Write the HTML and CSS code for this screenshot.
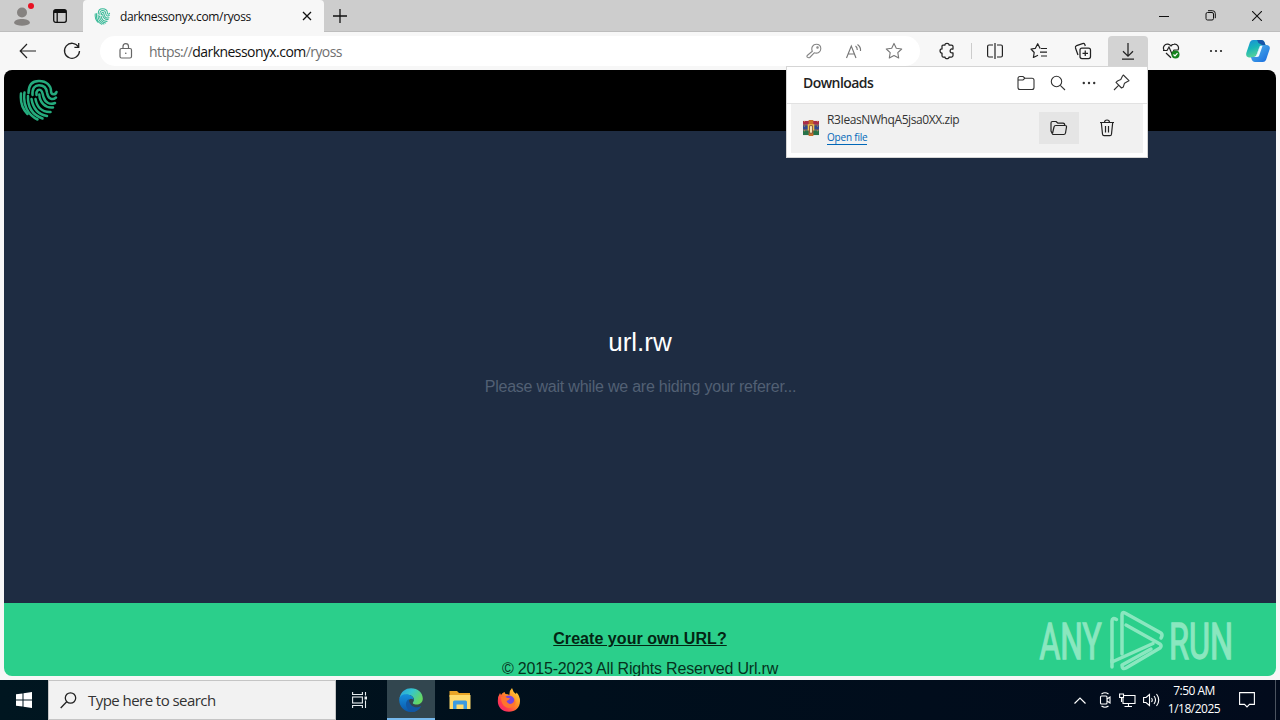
FILE: index.html
```html
<!DOCTYPE html>
<html lang="en">
<head>
<meta charset="utf-8">
<title>darknessonyx.com/ryoss</title>
<link rel="stylesheet" href="styles.css">
</head>
<body>
<svg class="defs" width="0" height="0">
  <symbol id="finger" viewBox="0 0 40 42">
    <g fill="none" stroke="currentColor" stroke-width="2.5" stroke-linecap="round">
      <path d="M9.500 14C9.500 5 14 2 20 2C28 2 32 7 32 12C32 16.500 36.500 16 37.500 13"/>
      <path d="M13.500 16C13 9 16 6.300 20 6.300C25 6.300 27.500 9.500 28 13.500C29 20 33.500 21.500 37 18.500"/>
      <path d="M17.500 16C17 11 20 10.200 21.500 11C24 12.500 23.500 15 24.500 18C26.500 24 31 26 36 24"/>
      <path d="M20.300 15.500C20.500 23 26 29.500 34 28.500"/>
      <path d="M16.500 20C18 28 23 33.500 31.500 33"/>
      <path d="M12.500 20C14 29 19.500 35.500 28 37"/>
      <path d="M9 17C8.500 28 14 36 23.500 39.500"/>
      <path d="M5.500 13.500C3.500 26 9 36 18.500 40.500"/>
      <path d="M2 14.500C1.200 22 3.500 30 8.500 35"/>
    </g>
  </symbol>
</svg>
<div class="screen">
  <div class="tabbar">
    <div class="profile"><svg width="18" height="20" viewBox="0 0 18 20"><circle cx="8" cy="5.500" r="5" fill="#858280"/><path d="M0 16C0 10.500 16 10.500 16 16C14 19.500 2 19.500 0 16Z" fill="#858280"/></svg><i class="dot"></i></div>
    <svg class="workspaces" width="14" height="14" viewBox="0 0 14 14" fill="none" stroke="#111" stroke-width="1.300"><rect x=".7" y=".7" width="12.600" height="12.600" rx="2"/><path d="M1 2.500H13" stroke-width="3"/><path d="M4.200 3V13"/></svg>
    <div class="tab">
      <svg class="tabicon" width="17" height="17"><use href="#finger"/></svg>
      <span class="tabtitle">darknessonyx.com/ryoss</span>
      <svg class="tabclose" width="10" height="10" viewBox="0 0 10 10" stroke="#111" stroke-width="1.300"><path d="M1 1L9 9M9 1L1 9"/></svg>
    </div>
    <svg class="newtab" width="14" height="14" viewBox="0 0 14 14" stroke="#111" stroke-width="1.300"><path d="M7 0V14M0 7H14"/></svg>
    <div class="wincontrols">
      <svg width="10" height="10" viewBox="0 0 10 10" stroke="#111"><path d="M0 5.500H10"/></svg>
      <svg width="11" height="11" viewBox="0 0 11 11" fill="none" stroke="#111"><rect x="1" y="2.500" width="7.500" height="7.500" rx="1.500"/><path d="M3 .7H7.500Q10.300 .7 10.300 3.500V8.200"/></svg>
      <svg width="10" height="10" viewBox="0 0 10 10" stroke="#111" stroke-width="1.100"><path d="M0 0L10 10M10 0L0 10"/></svg>
    </div>
  </div>

  <div class="toolbar">
    <div class="cell nav"><svg width="18" height="16" viewBox="0 0 18 16" fill="none" stroke="#222" stroke-width="1.200"><path d="M17 8H1.500M8 1L1.200 8L8 15"/></svg></div>
    <div class="cell nav"><svg width="18" height="18" viewBox="0 0 18 18" fill="none" stroke="#222" stroke-width="1.300"><path d="M15.500 5A7.500 7.500 0 1 0 16.500 9M15.700 1V5.300H11.400"/></svg></div>
    <div class="address">
      <svg class="lock" width="14" height="16" viewBox="0 0 14 16" fill="none" stroke="#666" stroke-width="1.200"><rect x="1" y="5.500" width="11.500" height="9.500" rx="1.500"/><path d="M4 5.500V3.500Q4 .7 6.750 .7T9.500 3.500V5.500"/><circle cx="6.750" cy="10.200" r=".8" fill="#666" stroke="none"/></svg>
      <span class="url"><span class="dim">https://</span><span class="host">darknessonyx.com</span><span class="dim path">/ryoss</span></span>
      <div class="addricons">
        <div class="cell"><svg width="16" height="16" viewBox="0 0 16 16" fill="none" stroke="#858585" stroke-width="1.100"><path d="M6.300 8.300C4.800 4.500 7 1.300 10.300 1.300C13 1.300 14.800 3.200 14.800 5.700C14.800 9 11.500 11 8.200 9.800L3.800 14.500Q2.500 15.200 1.300 14.200Q.5 13 1.500 12.200Z"/><circle cx="11.500" cy="4.500" r=".7"/></svg></div>
        <div class="cell"><svg width="18" height="17" viewBox="0 0 18 17" fill="none" stroke="#777" stroke-width="1.150"><path d="M1.500 15L6.300 3L11 15M3 11H9.500M10.500 3Q12.300 4.200 12.300 7M12.500 1.500Q16 4 15.500 8"/></svg></div>
        <div class="cell"><svg width="18" height="18" viewBox="0 0 18 18" fill="none" stroke="#777" stroke-width="1.100" stroke-linejoin="round"><path d="M9 1.400L11.300 6.200L16.700 7L12.800 10.700L13.700 16L9 13.500L4.300 16L5.200 10.700L1.300 7L6.700 6.200Z"/></svg></div>
      </div>
    </div>
    <div class="cell ext"><svg width="18" height="18" viewBox="0 0 18 18" fill="none" stroke="#222" stroke-width="1.250" stroke-linejoin="round"><path d="M4 4Q4 3 5 3H7C6.600 .7 11.400 .7 11 3H13.500Q15 3 15 4.500V7H14C11.500 6.800 11.500 11 14 10.900H15V13.500Q15 15 13.500 15H11C11.400 17.200 6.600 17.200 7 15H5Q4 15 4 13.500V11C1.600 11.400 1.200 6.600 4 7Z"/></svg></div>
    <i class="divider"></i>
    <div class="actions">
      <div class="cell"><svg width="18" height="16" viewBox="0 0 18 16" fill="none" stroke="#222" stroke-width="1.200"><path d="M7 2H3Q1.600 2 1.600 3.500V12.500Q1.600 14 3 14H7M11 2H15Q16.400 2 16.400 3.500V12.500Q16.400 14 15 14H11M9 0V16"/></svg></div>
      <div class="cell"><svg width="18" height="18" viewBox="0 0 18 18" fill="none" stroke="#222" stroke-width="1.200" stroke-linejoin="round"><path d="M10.500 6.300H10L7.700 1.700L5.400 6.300L1 7L4.200 10.500L3.400 15.500L8 13.300M11 6.500H17M10 10.200H17M11 14H17"/></svg></div>
      <div class="cell"><svg width="18" height="18" viewBox="0 0 18 18" fill="none" stroke="#222" stroke-width="1.250"><rect x="6" y="6" width="10.500" height="10.500" rx="2"/><path d="M11.250 8.500V14M8.500 11.250H14M4 13L1.500 6Q1 4.300 2.600 3.700L8.500 1.600Q10.200 1 10.800 2.500L11.300 4"/></svg></div>
      <div class="cell active"><svg width="14" height="17" viewBox="0 0 14 17" fill="none" stroke="#222" stroke-width="1.250"><path d="M7 0V13M2 8.300L7 13.200L12 8.300M1 16H13"/></svg></div>
      <div class="cell"><svg width="19" height="18" viewBox="0 0 19 18" fill="none" stroke="#222" stroke-width="1.200"><path d="M2.200 8.500C0 5 3 1.600 6 2.200Q8 2.600 9 4Q10 2.300 12 2.200C15.500 1.800 17.500 5 16 8M4 11L9 15.700M1 8.500H5L7 5L10 12L12 8H16.500"/><circle cx="13.500" cy="12.500" r="4" fill="#15831d" stroke="none"/><path d="M11.500 12.500L13 14L15.500 11.200" stroke="#fff"/></svg></div>
      <div class="cell"><svg width="14" height="4"><g fill="#222"><circle cx="2" cy="2" r="1.100"/><circle cx="7" cy="2" r="1.100"/><circle cx="12" cy="2" r="1.100"/></g></svg></div>
    </div>
    <svg class="copilot" width="24" height="24" viewBox="0 0 24 24">
      <defs><linearGradient id="ca" x2=".4" y2="1"><stop stop-color="#1b8bdc"/><stop offset=".5" stop-color="#18b5b8"/><stop offset="1" stop-color="#5bd497"/></linearGradient><linearGradient id="cb" x2="1" y2="1"><stop stop-color="#55bbea"/><stop offset="1" stop-color="#1769df"/></linearGradient></defs>
      <path d="M7 1H15Q18 1 18.800 4L19.500 6H17Q14 6 13 9L10.500 16Q9.500 19 7 18.500H3Q-.5 18 .3 14L4 3Q5 1 7 1Z" fill="url(#ca)"/>
      <path d="M15 1Q18 1 18.800 4L19.500 6H16L12.500 4L11 1Z" fill="#1755a8"/>
      <path d="M17 23H9Q6.500 23 5.500 20L5 18H7.500Q10 18 11 15L13.500 8Q14.500 6 17 6H20.500Q24.500 6.500 23.700 10L20 21Q19 23 17 23Z" fill="url(#cb)"/>
      <path d="M14 7L16.500 7L13 17Q12.400 18.300 10 18L8 18Q10 18 11 15Z" fill="#eefaff"/>
    </svg>
  </div>

  <div class="page">
    <div class="pagehead"><svg width="40" height="42"><use href="#finger"/></svg></div>
    <div class="pagebody"><h1>url.rw</h1><p>Please wait while we are hiding your referer...</p></div>
    <div class="pagefoot"><a>Create your own URL?</a><p>© 2015-2023 All Rights Reserved Url.rw</p></div>
  </div>

  <div class="taskbar">
    <div class="start"><svg width="16" height="16" viewBox="0 0 16 16" fill="#fff"><path d="M0 2.300L6.500 1.400V7.500H0ZM7.500 1.200L16 0V7.500H7.500ZM0 8.500H6.500V14.600L0 13.700ZM7.500 8.500H16V16L7.500 14.800Z"/></svg></div>
    <div class="search"><svg width="17" height="17" viewBox="0 0 17 17" fill="none" stroke="#222" stroke-width="1.300"><circle cx="10.500" cy="6" r="5.200"/><path d="M6.700 9.800L.7 16"/></svg><span>Type here to search</span></div>
    <div class="task"><svg width="16" height="16" viewBox="0 0 16 16" fill="none" stroke="#e6edf0" stroke-width="1.100"><path d="M.6 0V2.500H10.400V0M.6 16V13.500H10.400V16M13.500 0V3.500M13.500 8.500V16"/><rect x=".6" y="5" width="9.800" height="6"/><rect x="12.500" y="4.500" width="2.500" height="3" fill="#e6edf0" stroke="none"/></svg></div>
    <div class="task current"><svg width="24" height="24" viewBox="0 0 24 24">
      <defs><linearGradient id="ea" x2="1" y2=".5"><stop stop-color="#279fdd"/><stop offset=".5" stop-color="#35c5ce"/><stop offset="1" stop-color="#65d762"/></linearGradient><linearGradient id="eb" y2="1" x2="0"><stop stop-color="#158fdc"/><stop offset="1" stop-color="#0b57aa"/></linearGradient></defs>
      <path d="M.5 10C2 3.500 6.500 .2 12 .2C19 .2 23.800 5 23.800 10.500C23.800 15 20 17 16.500 16.500C13.500 16 13.500 15 14.300 14C17 10 12 6 7 7Q3 7.500 .5 10Z" fill="url(#ea)"/>
      <path d="M.2 12C0 7.500 5 5.500 9 6.500C12 7 14.700 9 14.700 12C11 8 7 14 10 18C13 22 19 21 22 18C20 22 16 24 12 24C5 24 .2 18 .2 12Z" fill="url(#eb)"/>
      <path d="M9.500 11C4.500 15 7.500 22.500 13 24C17 24 20 22 22 18C18 20.500 11 20 9.500 11Z" fill="#1257a3"/></svg></div>
    <div class="task"><svg width="22" height="20" viewBox="0 0 22 20"><path d="M.5 1H8L10 3H21V7H.5Z" fill="#e9a526"/><path d="M.5 5H21.500V19H.5Z" fill="#ffda6c"/><path d="M4 19V12Q4 10.500 5.500 10.500H16.500Q18 10.500 18 12V19H14.500V14.500H7.500V19Z" fill="#3c9be0"/></svg></div>
    <div class="task"><svg width="24" height="24" viewBox="0 0 24 24">
      <defs><linearGradient id="fa" x1="1" x2="0" y2="1"><stop stop-color="#ffe43d"/><stop offset=".45" stop-color="#ff8b26"/><stop offset=".75" stop-color="#ff3750"/><stop offset="1" stop-color="#e62387"/></linearGradient></defs>
      <path d="M3 5L4 7Q5 5 7.500 4L8.500 6Q11 6 12.500 7Q12 3 15 0Q16 4 19 6L19.500 4.500Q23 8 23 13C23 20 18 23.800 12 23.800C5 23.800 .8 19 .8 13Q.8 8 3 5Z" fill="url(#fa)"/><circle cx="12" cy="13" r="5.500" fill="#7545df"/><path d="M4 9Q8 8 10.500 10L13 10Q12 12.500 9.500 13Q11 17 15 15.500Q18 14 17 10Q20 14 17 18Q12 22 7 18Q4 15 4 9Z" fill="#ff742d"/></svg></div>
    <div class="tray">
      <svg width="12" height="7" viewBox="0 0 12 7" fill="none" stroke="#fff" stroke-width="1.200"><path d="M.5 6.500L6 1L11.500 6.500"/></svg>
      <svg width="13" height="16" viewBox="0 0 13 16" fill="none" stroke="#fff" stroke-width="1.100"><rect x="1.500" y="4" width="6.500" height="8" rx="1"/><path d="M8 7L11 5V11L8 9M2.500 2Q6 -.5 9.500 2M2.500 14Q6 16.500 9.500 14"/></svg>
      <svg width="17" height="15" viewBox="0 0 17 15" fill="none" stroke="#fff" stroke-width="1.100"><path d="M5 2.500H16V10.500H4V5M9.500 10.500V13.500M5.500 13.500H13"/><path d="M.6 1H4.500V4.500H.6ZM2.500 4.500V9"/></svg>
      <svg width="17" height="14" viewBox="0 0 17 14" fill="none" stroke="#fff" stroke-width="1.100"><path d="M.6 4.500H3L6.500 1.500V12.500L3 9.500H.6ZM8.500 5Q10 7 8.500 9M11 3Q14 7 11 11M13.500 1Q18 7 13.500 13"/></svg>
      <div class="clock"><span>7:50 AM</span><span class="date">1/18/2025</span></div>
      <svg class="notify" width="16" height="16" viewBox="0 0 16 16" fill="none" stroke="#fff" stroke-width="1.100"><path d="M.6 .6H15.400V12.400H10.500L8 15L5.500 12.400H.6Z"/></svg>
    </div>
    <i class="desktop-peek"></i>
  </div>

  <div class="downloads">
    <div class="dlhead"><b>Downloads</b>
      <div class="dlicons">
      <svg width="18" height="16" viewBox="0 0 18 16" fill="none" stroke="#333" stroke-width="1.100"><path d="M1 3.500Q1 1.500 3 1.500H6L8 3.200H15Q17 3.200 17 5.200V12.500Q17 14.500 15 14.500H3Q1 14.500 1 12.500ZM1 5H6L8 3.200"/></svg>
      <svg width="16" height="16" viewBox="0 0 16 16" fill="none" stroke="#333" stroke-width="1.100"><circle cx="6.500" cy="6.500" r="5.200"/><path d="M10.300 10.300L15 15"/></svg>
      <svg width="14" height="18" viewBox="0 0 14 18" fill="#333"><circle cx="1.800" cy="9" r="1.200"/><circle cx="7" cy="9" r="1.200"/><circle cx="12.200" cy="9" r="1.200"/></svg>
      <svg width="17" height="17" viewBox="0 0 17 17" fill="none" stroke="#333" stroke-width="1.100" stroke-linejoin="round"><path d="M10.300 1L16 6.700L14.500 7.500L11.500 9.200L10.300 13L8.500 14L3 8.300L4.500 7L7.800 5.500L9.500 2ZM5.800 11.200L1 16"/></svg>
      </div>
    </div>
    <div class="dlitem">
      <svg width="16" height="16" viewBox="0 0 17 17"><path d="M0 1H17V5H0Z" fill="#a92c49"/><path d="M0 6H17V10H0Z" fill="#304a92"/><path d="M0 11H17V16H0Z" fill="#27734a"/><path d="M0 5.500H17M0 10.500H17" stroke="#33232b"/><path d="M6 0H11V17H6Z" fill="#c96d2a"/><path d="M5 4.500H12V11H5Z" fill="#ecc14d"/><path d="M7 6H10V14H7Z" fill="#fff0c0" stroke="#805039"/><path d="M1.500 1V16M15.500 1V16" stroke="#d3a14b" stroke-dasharray="1 4"/></svg>
      <div class="dltext"><span class="fname">R3IeasNWhqA5jsa0XX.zip</span><a>Open file</a></div>
      <div class="dlbtn hover"><svg width="18" height="16" viewBox="0 0 18 16" fill="none" stroke="#222" stroke-width="1.200" stroke-linejoin="round"><path d="M2.200 13.500L1 11V3Q1 1.500 2.500 1.500H6L8 3.200H13Q14.800 3.200 14.800 5.500M2.600 13L4 7Q4.400 5.500 5.700 5.500H15Q16.800 5.500 16.500 7L15.500 13Q15.200 14.500 13.800 14.500H3.500Q2.300 14.500 2.200 13.500"/></svg></div>
      <div class="dlbtn"><svg width="16" height="18" viewBox="0 0 16 18" fill="none" stroke="#222" stroke-width="1.200"><path d="M1 3.500H15M5.500 3.500Q5.500 1 8 1T10.500 3.500M2.300 3.500L3.500 15Q3.700 16.700 5 16.700H11Q12.300 16.700 12.500 15L13.700 3.500M6.500 7V13.500M9.500 7V13.500"/></svg></div>
    </div>
  </div>

  <svg class="watermark" width="200" height="66" viewBox="0 0 200 66">
    <g class="brand">
      <text x="3.500" y="50.500" textLength="62" lengthAdjust="spacingAndGlyphs">ANY</text>
      <text x="133" y="50.500" textLength="64" lengthAdjust="spacingAndGlyphs">RUN</text>
    </g>
    <g fill="none" stroke="#e8fff4" stroke-width="3.500" stroke-linejoin="round" stroke-linecap="round">
      <path d="M80.500 11.500Q76 9 76 13V54L117 35.500"/>
      <path d="M86 46V7Q86 3.500 89 5L125 25Q127 27 125 30"/>
      <path d="M90 17L124 36Q126 38 124 40L90 60Q86 62 86 57L115 41"/>
      <path d="M76 52V59"/>
    </g>
  </svg>
</div>
</body>
</html>
```
FILE: styles.css
```css
* { box-sizing: border-box; }
body { margin: 0; font-family: "Open Sans", "Noto Sans", sans-serif; color: #111; }
svg { display: block; flex: none; }
i { flex: none; }
.defs { position: absolute; }
.screen { position: relative; width: 1280px; height: 720px; overflow: hidden; background: #f7f7f7; display: flex; flex-direction: column; }

.tabbar { height: 32px; background: #cdcdcd; display: flex; align-items: center; border-bottom: 1px solid #bdbdbd; }
.profile { position: relative; margin-left: 14px; width: 38px; padding-top: 3px; }
.dot { position: absolute; left: 14px; top: -1px; width: 6px; height: 6px; border-radius: 50%; background: #e81123; }
.workspaces { margin-left: 1px; }
.tab { margin-left: 16px; width: 241px; height: 32px; align-self: flex-start; background: #f7f7f7; border-radius: 4px 4px 0 0; display: flex; align-items: center; padding: 0 12px 0 11px; }
.tabicon { color: #37b997; }
.tabtitle { margin-left: 9px; font-size: 12px; letter-spacing: -.36px; white-space: nowrap; }
.tabclose { margin-left: auto; }
.newtab { margin-left: 9px; }
.wincontrols { margin-left: auto; margin-right: 18px; display: flex; align-items: center; gap: 36px; }

.toolbar { height: 38px; display: flex; align-items: center; padding: 0 10px 0 8px; }
.cell { width: 40px; height: 30px; display: flex; align-items: center; justify-content: center; }
.nav + .nav { margin-left: 4px; }
.address { margin-left: 8px; width: 820px; height: 30px; border-radius: 15px; background: #fff; display: flex; align-items: center; padding: 0 6px 0 19px; }
.url { margin-left: 16px; font-size: 14px; letter-spacing: -.56px; white-space: nowrap; }
.dim { color: #707070; }
.addricons { margin-left: auto; display: flex; }
.ext { margin-left: 7px; }
.divider { width: 1px; height: 16px; background: #ccc; margin-left: 4px; }
.actions { display: flex; gap: 4.200px; margin-left: 3px; }
.active { background: #d3d3d3; border-radius: 4px 4px 0 0; }
.copilot { margin-left: auto; }

.page { margin: 0 4px; height: 606px; border-radius: 8px; overflow: hidden; font-family: "Liberation Sans", Arial, sans-serif; text-align: center; display: flex; flex-direction: column; }
.pagehead { height: 61px; background: #000; color: #24ab7d; padding: 9px 0 0 15px; }
.pagebody { height: 472px; background: #1e2c42; display: flex; flex-direction: column; align-items: center; padding-top: 196px; }
.pagebody h1 { margin: 0; font-weight: 400; font-size: 26px; line-height: 30px; color: #fff; }
.pagebody p { margin: 21px 0 0 1px; font-size: 16px; line-height: 18px; letter-spacing: -.22px; color: #526074; }
.pagefoot { height: 73px; background: #2bcf8b; color: #06321d; padding-top: 27px; font-size: 16px; line-height: 18px; }
.pagefoot a { font-weight: 700; color: #032513; text-decoration: underline; letter-spacing: .05px; }
.pagefoot p { margin: 12px 0 0; letter-spacing: -.18px; }

.taskbar { margin-top: 4px; height: 40px; background: linear-gradient(90deg, #001620, #000f1c 45%, #020b1c); display: flex; align-items: stretch; color: #fff; }
.start { width: 48px; display: flex; align-items: center; justify-content: center; }
.search { width: 288px; background: #f2f2f2; border: 1px solid #c5c5c5; display: flex; align-items: center; padding-left: 11px; color: #333; font-size: 15px; letter-spacing: -.55px; }
.search span { margin-left: 11px; white-space: nowrap; }
.task { width: 49px; display: flex; align-items: center; justify-content: center; }
.search + .task { width: 51px; padding-right: 3px; }
.current { background: #32464f; border-bottom: 2px solid #76b9ed; width: 48px; padding-top: 2px; }
.tray { margin-left: auto; display: flex; align-items: center; gap: 7px; }
.tray svg:first-child { margin-right: 6px; }
.clock { width: 66px; margin-left: -6px; display: flex; flex-direction: column; align-items: center; font-size: 12px; line-height: 18px; letter-spacing: -.5px; }
.notify { margin-left: 5px; margin-right: 20px; }
.desktop-peek { width: 1px; margin-right: 4px; background: #4b535f; }

.downloads { position: absolute; left: 786px; top: 66px; width: 362px; height: 92px; background: #fff; border: 1px solid #d5d5d5; }
.dlhead { height: 37px; border-bottom: 1px solid #e2e2e2; padding: 0 17px 5px 16px; display: flex; align-items: center; justify-content: space-between; font-size: 14px; letter-spacing: -.56px; }
.dlhead b { font-weight: 600; color: #222; }
.dlicons { display: flex; align-items: center; gap: 16px; }
.dlicons svg:first-child { margin-right: -1px; }
.dlicons svg:last-child { margin-left: 1px; }
.dlitem { margin: 0 4px; height: 49px; background: #f1f1f1; display: flex; align-items: center; padding: 0 16px 2px 12px; }
.dltext { margin-left: 8px; margin-right: auto; padding-top: 2px; display: flex; flex-direction: column; align-items: flex-start; }
.fname { font-size: 12px; line-height: 16px; color: #333; letter-spacing: -.41px; }
.dltext a { margin-top: 2px; font-size: 10px; line-height: 14px; letter-spacing: -.2px; color: #0067b8; border-bottom: 1px solid #0067b8; }
.dlbtn { width: 40px; height: 32px; display: flex; align-items: center; justify-content: center; }
.hover { background: #e5e5e5; margin-right: 8px; }

.watermark { position: absolute; left: 1036px; top: 608px; opacity: .5; overflow: visible; }
.brand { fill: #e8fff4; stroke: #e8fff4; stroke-width: 1.400px; font-family: Roboto, sans-serif; font-size: 50px; }
```
